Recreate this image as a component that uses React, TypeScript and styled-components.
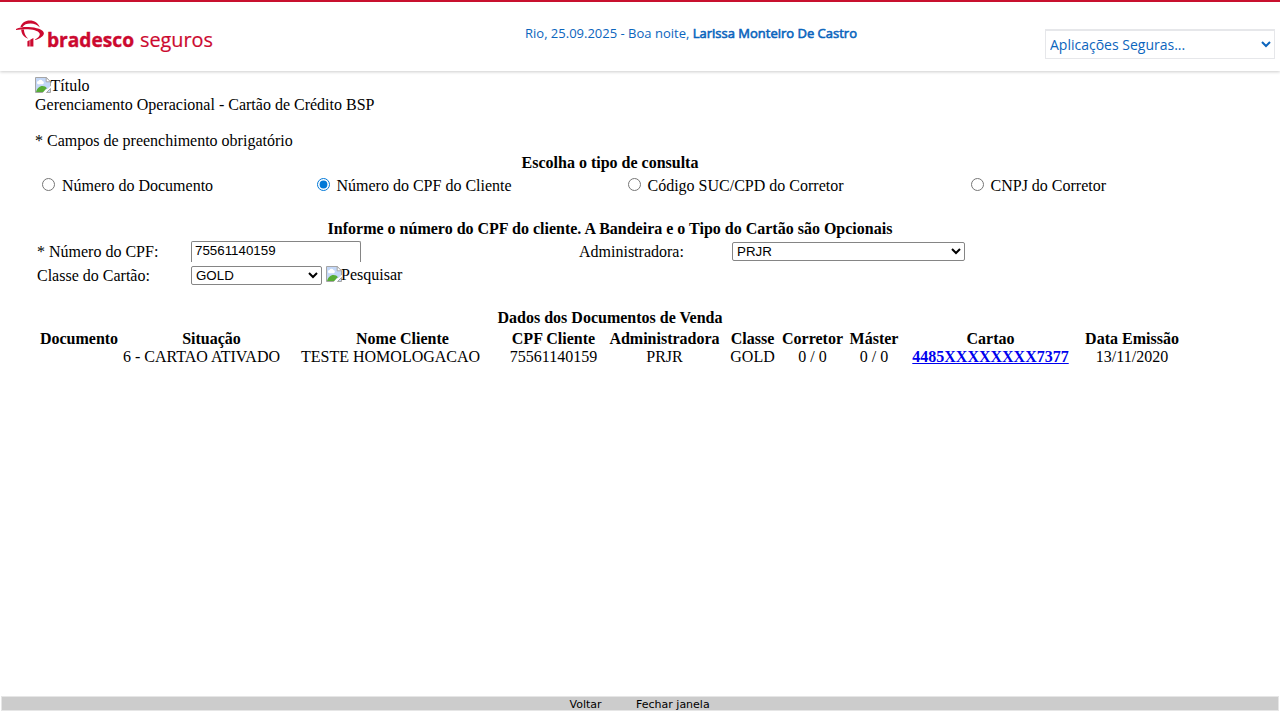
import React from 'react';
import styled, { createGlobalStyle } from 'styled-components';

const GlobalStyle = createGlobalStyle`
  * { box-sizing: border-box; }
  body { margin: 0; background: #fff; color: #000; overflow: hidden; }
`;

const Page = styled.div`
  display: flex;
  flex-direction: column;
  height: 720px;
  width: 1280px;
  font: 16px/18px 'Liberation Serif', 'Times New Roman', serif;
  white-space: nowrap;
`;

const Header = styled.header`
  display: grid;
  grid-template-columns: 16px 509px 520px 230px;
  align-items: start;
  height: 71px;
  flex: none;
  border-top: 2px solid #c8102e;
  box-shadow: 0 1px 3px rgba(0, 0, 0, 0.2);
`;

const LogoSvg = styled.svg`
  grid-column: 2;
  display: block;
  margin-top: 14px;
  overflow: visible;
`;

const Greeting = styled.div`
  margin-top: 22px;
  font: 13px/18px 'Open Sans', sans-serif;
  color: #0c65bd;
  strong { font-weight: 400; -webkit-text-stroke: 0.6px #0c65bd; }
`;

const AppSelect = styled.select`
  width: 230px;
  height: 30px;
  margin-top: 27px;
  padding: 0;
  border: 2px solid #e6e7ea;
  border-width: 2px 1px 1px;
  background: #fff;
  color: #0c65bd;
  font: 14px 'Open Sans', sans-serif;
`;

const Main = styled.main`
  flex: 1;
  width: 1150px;
  margin: 6px 0 0 35px;
`;

const Line = styled.div<{ $top?: number; $center?: boolean }>`
  height: 18px;
  margin-top: ${(p) => p.$top ?? 0}px;
  text-align: ${(p) => (p.$center ? 'center' : 'left')};
  font-weight: ${(p) => (p.$center ? 700 : 400)};
`;

const ImageLine = styled(Line)`
  display: flex;
`;

const BrokenImage = styled.svg`
  flex: none;
  width: 16px;
  height: 16px;
  margin-right: -0.5px;
`;

const Options = styled.div`
  display: grid;
  grid-template-columns: 274.5px 311px 343px 200px;
  margin: 5px 0 0 7px;
  height: 18px;
`;

const Option = styled.label`
  display: flex;
  gap: 7px;
  input { margin: 1px 0 0; width: 13px; height: 13px; accent-color: #0078d7; }
`;

const Form = styled.div`
  display: grid;
  grid-template-columns: 154px 388px 153px 233px;
  grid-template-rows: 24px 22px;
  margin: 3px 0 0 2px;
`;

const Label = styled.label`
  padding-top: 2px;
`;

const TextInput = styled.input`
  width: 170px;
  height: 21px;
  padding: 0 2px 3px 3px;
  border: 1px solid #858585;
  border-bottom: 0;
  border-radius: 2px 2px 0 0;
  font: 13.333px 'Liberation Sans', Arial, sans-serif;
`;

const Select = styled.select<{ $width: number }>`
  width: ${(p) => p.$width}px;
  height: 19px;
  margin: 1px 0 0;
  border: 1px solid #858585;
  border-radius: 2px;
  background: #fff;
  font: 13.333px 'Liberation Sans', Arial, sans-serif;
`;

const Search = styled.div`
  display: flex;
  gap: 4px;
`;

const SearchImage = styled.span`
  display: flex;
  margin-top: 1px;
  margin-left: -0.4px;
`;

const Row = styled.div<{ $head?: boolean }>`
  display: grid;
  grid-template-columns: 82px 183px 199px 103px 119px 57px 63px 60px 173px 110px;
  margin: ${(p) => (p.$head ? 3 : 0)}px 0 0 3px;
  height: 18px;
  font-weight: ${(p) => (p.$head ? 700 : 400)};
`;

const Cell = styled.div<{ $trail?: number; $pull?: number }>`
  text-align: center;
  padding-right: ${(p) => p.$trail ?? 0}px;
  margin-left: ${(p) => -(p.$pull ?? 0)}px;
`;

const CardLink = styled.a`
  color: #0000ee;
  font-weight: 700;
`;

const Footer = styled.footer`
  display: flex;
  gap: 34.5px;
  height: 15px;
  flex: none;
  margin: 0 1px 9px;
  padding-left: 567.5px;
  border: 1px solid #e6e6e6;
  background: #ccc;
  font: 11px/16px 'DejaVu Sans', Verdana, sans-serif;
`;

const MissingPicture = () => (
  <BrokenImage viewBox="0 0 16 16">
    <path d="M.5.5h10.7l4.3 4.3v5L9 15.5H.5z" fill="#c3d7f7" stroke="#a5a5a5" />
    <path d="M11.2.5v4.3h4.3z" fill="#fff" stroke="#a5a5a5" />
    <path d="M3 7.200a1.600 1.600 0 0 1 .5-3.100 2.200 2.200 0 0 1 4 0 1.600 1.600 0 0 1 .3 3.100z" fill="#fff" />
    <path d="M1 15c1-3.500 3.400-6 6.500-6 2 0 3.400.9 4.300 2.200L8.500 15z" fill="#57ad35" />
    <path d="M7.500 16l3.200-3.500 2-.7L16 8.700v2L11 16z" fill="#fff" />
    <path d="M11.500 15.500h4v-4z" fill="#c3d7f7" stroke="#a5a5a5" />
  </BrokenImage>
);

const Logo = () => (
  <LogoSvg width="200" height="44" viewBox="16 16 200 44" fill="#cc092f">
    <path d="M16 28.900c3.500-1.500 8-2.100 12.500-1.900 7.500.3 15.400 2.600 15.400 6.200 0 2.700-3.800 5.300-8.600 6.800l-.3-.6c3-1.500 4.800-3.400 4.800-5.100 0-2.800-4.800-4.700-11.800-5.100-4.200-.2-8.200.1-12 .9z" />
    <path d="M20.400 27.300c1-4 4.900-6.700 9.400-6.700 4.700 0 8.400 2.400 10 6.900-2.400-2.700-5.600-3.900-9.300-3.900-3.900 0-6.500 1.200-7.900 3.400z" />
    <path d="M21.200 29.500h2.700c.1 3.600 1.500 6.600 4.300 9.300-4.300-1.700-6.900-4.800-7-9.300z" />
    <path d="M27.400 41.300l2.300-1.200v6.500h-2.300zM30.200 39.700l3.200-1.700v8.600h-3.200z" />
    <text x="47" y="46.500" fontFamily="Open Sans, sans-serif" fontWeight="700" stroke="#cc092f" strokeWidth="0.400" fontSize="20" textLength="87" lengthAdjust="spacingAndGlyphs">bradesco</text>
    <text x="140" y="46.500" fontFamily="Open Sans, sans-serif" fontSize="20" stroke="#cc092f" strokeWidth="0.200" textLength="73" lengthAdjust="spacingAndGlyphs">seguros</text>
  </LogoSvg>
);

const queryTypes = [
  'Número do Documento',
  'Número do CPF do Cliente',
  'Código SUC/CPD do Corretor',
  'CNPJ do Corretor',
];

const columns = [
  'Documento', 'Situação', 'Nome Cliente', 'CPF Cliente', 'Administradora',
  'Classe', 'Corretor', 'Máster', 'Cartao', 'Data Emissão',
];

export default function App() {
  return (
    <Page>
      <GlobalStyle />
      <Header>
        <Logo />
        <Greeting>
          Rio, 25.09.2025 - Boa noite, <strong>Larissa Monteiro De Castro</strong>
        </Greeting>
        <AppSelect>
          <option>Aplicações Seguras...</option>
        </AppSelect>
      </Header>
      <Main>
        <ImageLine><MissingPicture />Título</ImageLine>
        <Line $top={1}>Gerenciamento Operacional - Cartão de Crédito BSP</Line>
        <Line $top={18}>* Campos de preenchimento obrigatório</Line>
        <Line $top={4} $center>Escolha o tipo de consulta</Line>
        <Options>
          {queryTypes.map((type, i) => (
            <Option key={type}>
              <input type="radio" name="tipo" defaultChecked={i === 1} />
              {type}
            </Option>
          ))}
        </Options>
        <Line $top={25} $center>Informe o número do CPF do cliente. A Bandeira e o Tipo do Cartão são Opcionais</Line>
        <Form>
          <Label>* Número do CPF:</Label>
          <TextInput defaultValue="75561140159" />
          <Label>Administradora:</Label>
          <Select $width={233}><option>PRJR</option></Select>
          <Label>Classe do Cartão:</Label>
          <Search>
            <Select $width={131}><option>GOLD</option></Select>
            <SearchImage><MissingPicture />Pesquisar</SearchImage>
          </Search>
        </Form>
        <Line $top={22} $center>Dados dos Documentos de Venda</Line>
        <Row $head>
          {columns.map((name) => <Cell key={name}>{name}</Cell>)}
        </Row>
        <Row>
          <Cell />
          <Cell $trail={20}>6 - CARTAO ATIVADO</Cell>
          <Cell $trail={24} $pull={2}>TESTE HOMOLOGACAO</Cell>
          <Cell>75561140159</Cell>
          <Cell>PRJR</Cell>
          <Cell>GOLD</Cell>
          <Cell>0 / 0</Cell>
          <Cell>0 / 0</Cell>
          <Cell><CardLink href="#">4485XXXXXXXX7377</CardLink></Cell>
          <Cell>13/11/2020</Cell>
        </Row>
      </Main>
      <Footer>
        <span>Voltar</span>
        <span>Fechar janela</span>
      </Footer>
    </Page>
  );
}
